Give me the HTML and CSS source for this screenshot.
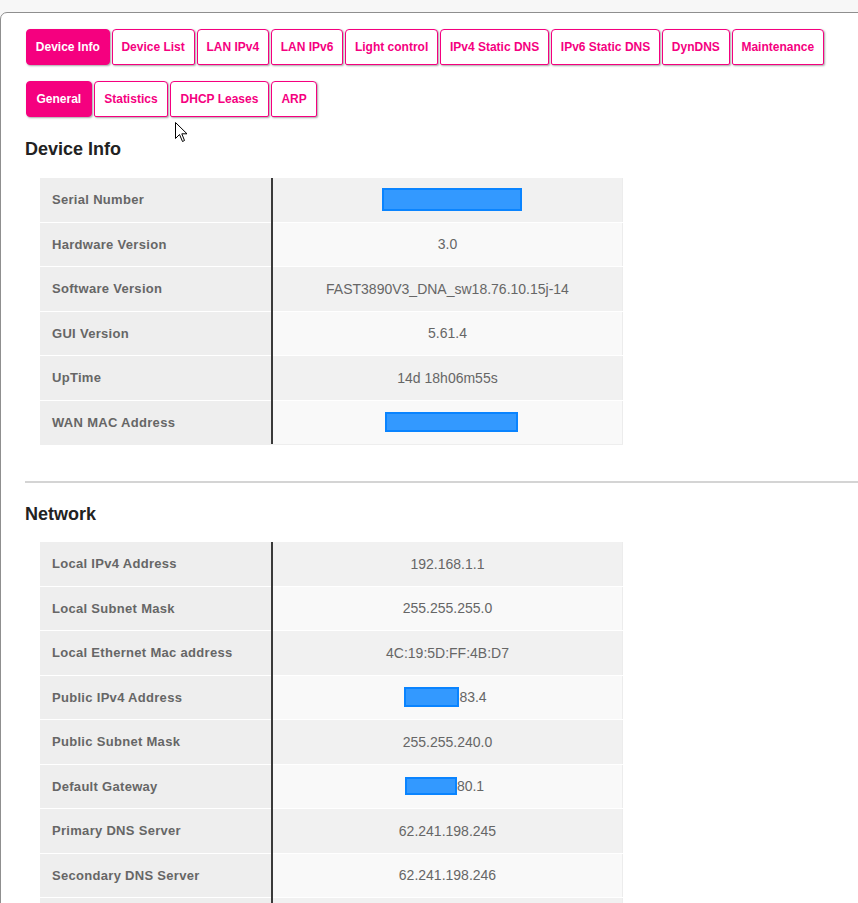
FILE: index.html
```html
<!DOCTYPE html>
<html>
<head>
<meta charset="utf-8">
<title>Device Info</title>
<link rel="stylesheet" href="styles.css">
</head>
<body>
<div class="frame">
  <nav class="tabs">
    <a class="tab active">Device Info</a>
    <a class="tab">Device List</a>
    <a class="tab">LAN IPv4</a>
    <a class="tab">LAN IPv6</a>
    <a class="tab">Light control</a>
    <a class="tab">IPv4 Static DNS</a>
    <a class="tab">IPv6 Static DNS</a>
    <a class="tab">DynDNS</a>
    <a class="tab">Maintenance</a>
  </nav>
  <nav class="tabs sub">
    <a class="tab active">General</a>
    <a class="tab">Statistics</a>
    <a class="tab">DHCP Leases</a>
    <a class="tab">ARP</a>
  </nav>

  <h2 class="section-title">Device Info</h2>
  <div class="kv">
    <div class="k">Serial Number</div><div class="v r1"><span class="redact serial"></span></div>
    <div class="k">Hardware Version</div><div class="v r2">3.0</div>
    <div class="k">Software Version</div><div class="v r1">FAST3890V3_DNA_sw18.76.10.15j-14</div>
    <div class="k">GUI Version</div><div class="v r2">5.61.4</div>
    <div class="k">UpTime</div><div class="v r1">14d 18h06m55s</div>
    <div class="k">WAN MAC Address</div><div class="v r2"><span class="redact wanmac"></span></div>
  </div>

  <hr class="sep">

  <h2 class="section-title second">Network</h2>
  <div class="kv">
    <div class="k">Local IPv4 Address</div><div class="v r1">192.168.1.1</div>
    <div class="k">Local Subnet Mask</div><div class="v r2">255.255.255.0</div>
    <div class="k">Local Ethernet Mac address</div><div class="v r1">4C:19:5D:FF:4B:D7</div>
    <div class="k">Public IPv4 Address</div><div class="v r2"><span class="redact pub"></span>83.4</div>
    <div class="k">Public Subnet Mask</div><div class="v r1">255.255.240.0</div>
    <div class="k">Default Gateway</div><div class="v r2"><span class="redact gw"></span>80.1</div>
    <div class="k">Primary DNS Server</div><div class="v r1">62.241.198.245</div>
    <div class="k">Secondary DNS Server</div><div class="v r2">62.241.198.246</div>
    <div class="k">&nbsp;</div><div class="v r1">&nbsp;</div>
  </div>
</div>

<svg class="cursor" width="13" height="21" viewBox="0 0 13 21">
  <path d="M0.5 0.5 L0.5 16.5 L4.5 12.5 L7.5 19.5 L9.5 18.5 L6.8 11.8 L12 11.8 Z" fill="#fff" stroke="#000" stroke-width="1" stroke-linejoin="miter"/>
</svg>
</body>
</html>
```

FILE: styles.css
```css
html, body {
  margin: 0;
  padding: 0;
}
body {
  background: #f7f7f7;
  font-family: "Liberation Sans", Arial, sans-serif;
  overflow: hidden;
  position: relative;
  height: 903px;
}
.frame {
  margin-top: 12px;
  margin-left: 0;
  width: 900px;
  min-height: 900px;
  background: #fff;
  border: 1px solid #8f8f8f;
  border-radius: 7px 0 0 0;
  padding: 16px 0 0 24px;
  box-sizing: border-box;
}
.tabs {
  display: flex;
  gap: 2px;
  margin-left: 1px;
}
.tabs.sub {
  margin-top: 16px;
}
.tab {
  display: block;
  height: 36px;
  box-sizing: border-box;
  line-height: 35px;
  padding: 0 9px;
  border: 1px solid #f5007f;
  border-radius: 4px 4px 2px 2px;
  color: #f5007f;
  background: #fff;
  font-size: 12px;
  font-weight: bold;
  box-shadow: 1px 1px 2px rgba(0, 0, 0, 0.35);
  white-space: nowrap;
}
.tabs:not(.sub) .tab {
  padding: 0 8.8px;
}
.tabs.sub .tab {
  padding: 0 9.5px;
}
.tab.active {
  background: #f5007f;
  color: #fff;
  border-radius: 4px;
}
.section-title {
  margin: 21px 0 18px 0;
  font-size: 18px;
  line-height: 22px;
  font-weight: bold;
  color: #222;
}
.section-title.second {
  margin: 20px 0 17px 0;
}
.kv {
  margin-left: 15px;
  width: 583px;
  display: grid;
  grid-template-columns: 231px 350px;
  column-gap: 2px;
  row-gap: 1px;
  grid-auto-rows: 43.5px;
  background: linear-gradient(to right, transparent 231px, #3a3a3a 231px, #3a3a3a 233px, transparent 233px), #fff;
  border-bottom: 1px solid #eee;
  font-size: 13px;
  color: #666;
}
.k {
  background: #eeeeee;
  font-weight: bold;
  letter-spacing: 0.3px;
  padding-left: 12px;
  display: flex;
  align-items: center;
}
.v {
  display: flex;
  align-items: center;
  justify-content: center;
  border-right: 1px solid #ececec;
  font-size: 14px;
}
.v.r1 { background: #f1f1f1; }
.v.r2 { background: #f9f9f9; }
.redact {
  display: inline-block;
  box-sizing: border-box;
  background: #3399ff;
  border: 2px solid #0a84ff;
}
.redact.serial { width: 140px; height: 23px; margin-left: 8px; }
.redact.wanmac { width: 133px; height: 20px; margin-left: 8px; }
.redact.pub { width: 55px; height: 20px; margin-left: -4px; }
.redact.gw { width: 52px; height: 18px; margin-left: -6px; }
.sep {
  margin: 36px 0 0 0;
  border: 0;
  border-top: 2px solid #d4d4d4;
  height: 0;
}
.cursor {
  position: absolute;
  left: 175px;
  top: 122px;
}
```
